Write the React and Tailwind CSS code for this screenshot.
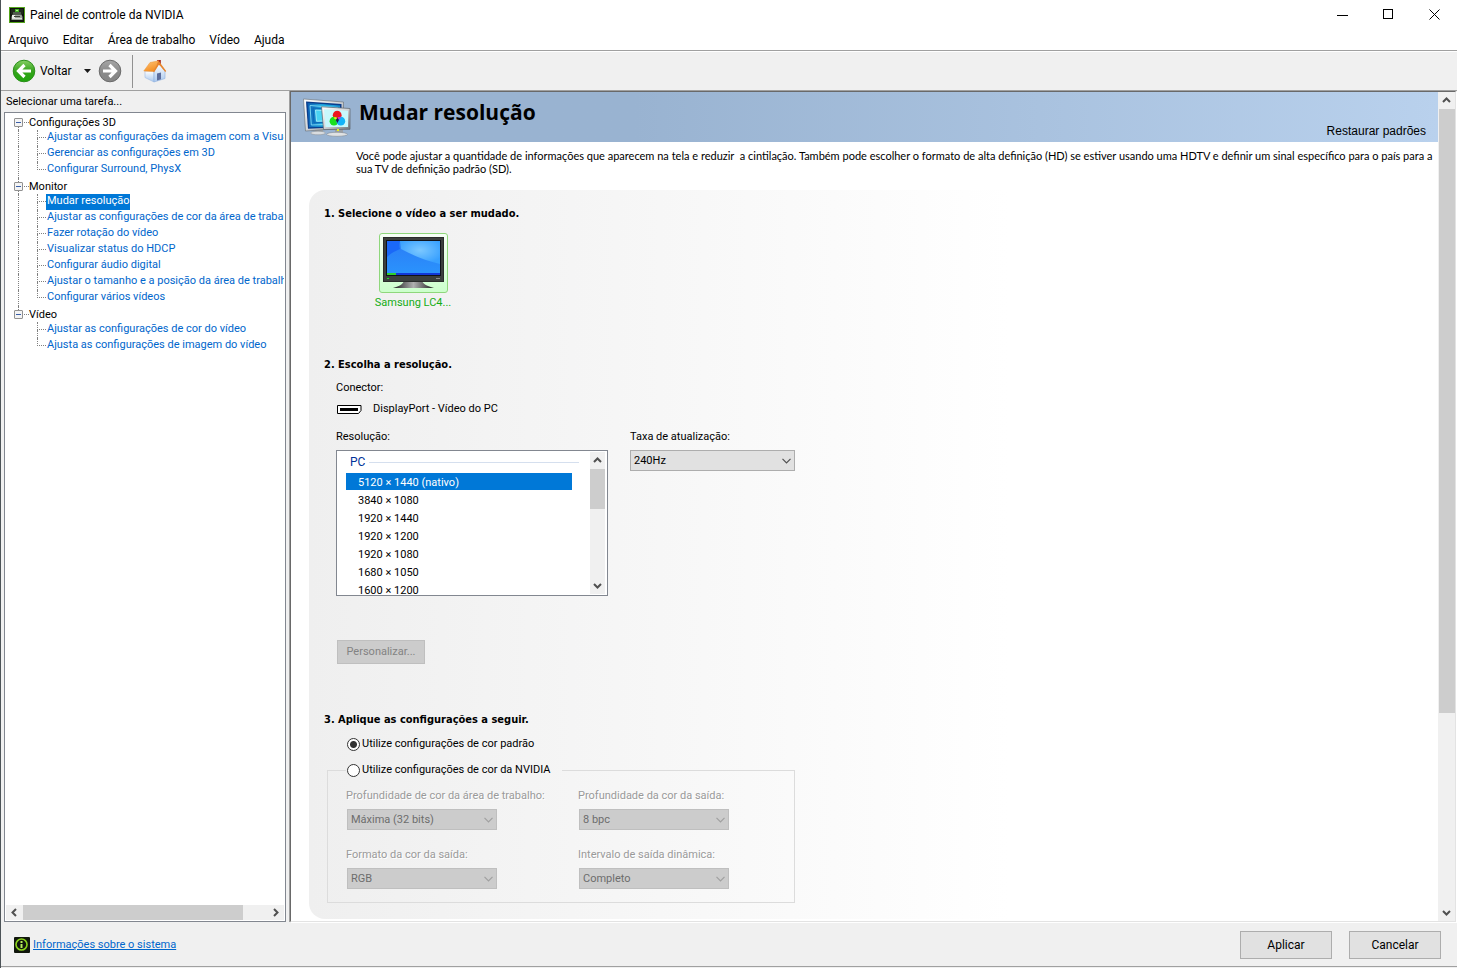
import React, { useState } from "react";

const MENU = ["Arquivo", "Editar", "Área de trabalho", "Vídeo", "Ajuda"];

const TREE = [
  {
    label: "Configurações 3D",
    items: [
      "Ajustar as configurações da imagem com a Visualização",
      "Gerenciar as configurações em 3D",
      "Configurar Surround, PhysX",
    ],
  },
  {
    label: "Monitor",
    items: [
      "Mudar resolução",
      "Ajustar as configurações de cor da área de trabalho",
      "Fazer rotação do vídeo",
      "Visualizar status do HDCP",
      "Configurar áudio digital",
      "Ajustar o tamanho e a posição da área de trabalho",
      "Configurar vários vídeos",
    ],
  },
  {
    label: "Vídeo",
    items: ["Ajustar as configurações de cor do vídeo", "Ajusta as configurações de imagem do vídeo"],
  },
];

const RESOLUTIONS = [
  "5120 × 1440 (nativo)",
  "3840 × 1080",
  "1920 × 1440",
  "1920 × 1200",
  "1920 × 1080",
  "1680 × 1050",
  "1600 × 1200",
];

function AppIcon() {
  return (
    <svg width="16" height="16" viewBox="0 0 16 16" aria-hidden="true">
      <rect x="0.5" y="0.5" width="15" height="15" fill="#0e130c" stroke="#55a51c" />
      <rect x="2" y="2" width="12" height="5" fill="#20281d" />
      <rect x="4" y="5" width="8" height="2" fill="#4f5a4c" />
      <rect x="6" y="2" width="4" height="3" fill="#3fae22" />
      <rect x="7" y="3" width="2" height="1" fill="#a6f57e" />
      <path d="M3.500 7.500h9l1 2.500v3h-11v-3z" fill="#9da39b" />
      <rect x="3" y="8" width="3" height="3" fill="#e9ece8" />
      <rect x="5" y="9" width="6" height="1" fill="#3a3f38" />
      <rect x="3" y="11" width="10" height="1" fill="#d9dcd8" />
    </svg>
  );
}

function ArrowDisc({ green, flip }) {
  const id = green ? "discGreen" : "discGray";
  return (
    <svg width="24" height="24" viewBox="0 0 24 24" aria-hidden="true">
      <defs>
        <linearGradient id={id} x1="0" y1="0" x2="0" y2="1">
          <stop offset="0" stopColor={green ? "#86cf64" : "#a6a6a6"} />
          <stop offset="0.5" stopColor={green ? "#35a31c" : "#8c8c8c"} />
          <stop offset="1" stopColor={green ? "#1fa60c" : "#858585"} />
        </linearGradient>
      </defs>
      <circle cx="12" cy="12" r="10.800" fill={"url(#" + id + ")"} stroke={green ? "#2a8f1a" : "#6b6b6b"} />
      <path
        d={flip ? "M5 12h11.500M11.500 6l6 6-6 6" : "M19 12H7.500M12.500 6l-6 6 6 6"}
        fill="none"
        stroke="#fff"
        strokeWidth="3.200"
      />
    </svg>
  );
}

function HouseIcon() {
  return (
    <svg width="24" height="24" viewBox="0 0 24 24" aria-hidden="true">
      <defs>
        <linearGradient id="roof" x1="0" y1="0" x2="0.5" y2="1">
          <stop offset="0" stopColor="#fdc47c" />
          <stop offset="1" stopColor="#f58f22" />
        </linearGradient>
        <linearGradient id="wall" x1="0" y1="0" x2="0" y2="1">
          <stop offset="0" stopColor="#ffffff" />
          <stop offset="1" stopColor="#a9c8ee" />
        </linearGradient>
      </defs>
      <path d="M2 12l9 0v11L2 18.500z" fill="url(#wall)" stroke="#9dbbe2" strokeWidth="0.6" />
      <path d="M11 12l5-7.500 6 7.500v7.500L11 23z" fill="url(#wall)" stroke="#8fb0dd" strokeWidth="0.6" />
      <path d="M14 14.500l4-1v6.800l-4 1.200z" fill="#5c6d9c" />
      <path d="M14.200 1h3.600v6l-3.600-2.500z" fill="#a52318" />
      <path d="M0.800 12L7 3.500l8.800-1.700-5.300 10.700z" fill="url(#roof)" stroke="#ee9433" strokeWidth="0.5" />
      <path d="M15.800 2l7.400 10-1 1-6.200-7.600-4.800 7.800-1.200-.6z" fill="#e8852c" />
    </svg>
  );
}

function ScreensIcon() {
  return (
    <svg width="48" height="40" viewBox="0 0 48 40" aria-hidden="true">
      <defs>
        <linearGradient id="screenBlue" x1="0" y1="0" x2="1" y2="0">
          <stop offset="0" stopColor="#0b5fb4" />
          <stop offset="0.5" stopColor="#22b2e4" />
          <stop offset="1" stopColor="#1a8fd0" />
        </linearGradient>
        <linearGradient id="frameGray" x1="0" y1="0" x2="1" y2="1">
          <stop offset="0" stopColor="#ffffff" />
          <stop offset="0.5" stopColor="#d3d6d9" />
          <stop offset="1" stopColor="#70767c" />
        </linearGradient>
      </defs>
      <path d="M12 32l8-1v4h-8z" fill="#a4a9ae" />
      <ellipse cx="15" cy="35" rx="7.500" ry="1.800" fill="#d9dcdf" stroke="#868c92" strokeWidth="0.5" />
      <path d="M0.500 1l40 3v26.500L2.500 33z" fill="url(#frameGray)" stroke="#656b72" strokeWidth="0.6" />
      <path d="M3 3.500l35.500 2.600V29L5 30.800z" fill="#0a3d8c" />
      <path d="M4.500 5l32.500 2.400V28L6 29.300z" fill="url(#screenBlue)" />
      <path d="M7 7.500l27.500 2V26L8.300 27z" fill="none" stroke="#7fdcf6" strokeWidth="0.9" />
      <path d="M10 10l22 1.600V24l-21 .8z" fill="none" stroke="#0d62b4" strokeWidth="0.9" />
      <path d="M12.500 12l17 1.200v9.500l-16 .6z" fill="#49d3f2" stroke="#a8f0fc" strokeWidth="0.9" />
      <path d="M32 31h8v4.500h-8z" fill="#9a9fa5" />
      <ellipse cx="34" cy="36.300" rx="10.500" ry="2" fill="#dfe2e4" stroke="#7d8388" strokeWidth="0.5" />
      <path d="M18.500 8.800L47 10.500v20.800L20.500 31.500z" fill="url(#frameGray)" stroke="#5c6268" strokeWidth="0.7" />
      <path d="M21 11.300l24 1.400v16.300L22.500 29z" fill="#c8f8fc" />
      <circle cx="34.200" cy="17.200" r="4.400" fill="#ee1620" />
      <circle cx="31" cy="23.200" r="4.400" fill="#18e01e" />
      <circle cx="37.800" cy="23.200" r="4.400" fill="#14b4f8" />
      <path d="M30.500 19.500c1 2 2.500 2.200 3.700 1.600l-1-2.200z" fill="#f6e21a" />
      <path d="M38 19.500c-1 2-2.500 2.200-3.700 1.600l1-2.200z" fill="#e020d0" />
      <path d="M34.400 19.800l1.600 2.200-1.600 3-1.600-3z" fill="#241c4c" />
      <rect x="34" y="31" width="2" height="2" fill="#e6f01c" />
    </svg>
  );
}

function MonitorIcon() {
  return (
    <svg width="63" height="52" viewBox="0 0 63 52" aria-hidden="true">
      <defs>
        <linearGradient id="desk" x1="0" y1="0" x2="0" y2="1">
          <stop offset="0" stopColor="#2b7cf6" />
          <stop offset="1" stopColor="#2a94fd" />
        </linearGradient>
        <radialGradient id="glow" cx="0.5" cy="0.4" r="0.6">
          <stop offset="0" stopColor="#7cc8ff" />
          <stop offset="1" stopColor="#38a0ff" />
        </radialGradient>
        <linearGradient id="foot" x1="0" y1="0" x2="1" y2="0">
          <stop offset="0" stopColor="#1c1c1c" />
          <stop offset="0.5" stopColor="#b0b0b0" />
          <stop offset="1" stopColor="#1c1c1c" />
        </linearGradient>
      </defs>
      <path d="M22 44h18c1 3 5 5 12 7H11c7-2 10-4 11-7z" fill="url(#foot)" />
      <rect x="1" y="0" width="61" height="45" fill="#3b3f3d" />
      <rect x="1.500" y="0.500" width="60" height="44" fill="none" stroke="#2a2c2b" />
      <rect x="4" y="3" width="55" height="36" fill="#10131a" />
      <rect x="5" y="4" width="53" height="34" fill="url(#desk)" />
      <path d="M18 4h40v23C44 24 30 18 19 12z" fill="url(#glow)" />
      <path d="M5 4h13c-1 3-1 5 0 8-5 2-9 4-13 8z" fill="#1a68f8" />
      <rect x="5" y="36" width="53" height="2" fill="#1238d8" />
      <rect x="5" y="36" width="9" height="2" fill="#2fd02c" />
      <rect x="5" y="41" width="2" height="1" fill="#18e018" />
      <rect x="54" y="41" width="4" height="1" fill="#8a8a8a" />
    </svg>
  );
}

function InfoIcon() {
  return (
    <svg width="16" height="16" viewBox="0 0 16 16" aria-hidden="true">
      <rect width="16" height="16" rx="1" fill="#10160c" />
      <circle cx="7.500" cy="7.500" r="5.500" fill="none" stroke="#8bd41c" strokeWidth="1.600" />
      <rect x="6.500" y="4" width="2" height="2" fill="#b6ec5c" />
      <rect x="6.500" y="7" width="2" height="4" fill="#b6ec5c" />
    </svg>
  );
}

const CHEVRONS = {
  up: "M1 6L4.500 2.500 8 6",
  down: "M1 3L4.500 6.500 8 3",
  left: "M6 1L2.500 4.500 6 8",
  right: "M3 1l3.500 3.500L3 8",
};

function ScrollArrow({ dir, label }) {
  return (
    <button type="button" aria-label={label} className="flex size-[17px] shrink-0 items-center justify-center">
      <svg width="9" height="9" viewBox="0 0 9 9" aria-hidden="true">
        <path d={CHEVRONS[dir]} fill="none" stroke="#505050" strokeWidth="2" />
      </svg>
    </button>
  );
}

function Combo({ id, value, disabled, className }) {
  return (
    <span className={"grid h-[21px] items-center " + className}>
      <select
        id={id}
        disabled={disabled}
        defaultValue={value}
        className={
          "col-start-1 row-start-1 h-full w-full appearance-none border pl-[3px] pt-px opacity-100 " +
          (disabled ? "border-[#bfbfbf] bg-[#cccccc] text-[#6d6d6d]" : "border-[#adadad] bg-[#e1e1e1] text-black")
        }
      >
        <option>{value}</option>
      </select>
      <svg
        width="9"
        height="6"
        viewBox="0 0 9 6"
        aria-hidden="true"
        className="pointer-events-none col-start-1 row-start-1 mr-1 justify-self-end"
      >
        <path d="M0.500 0.800l4 4 4-4" fill="none" stroke={disabled ? "#a0a0a0" : "#505050"} strokeWidth="1.200" />
      </svg>
    </span>
  );
}

function DisabledField({ id, label, value }) {
  return (
    <div className="flex flex-col gap-[5px]">
      <label htmlFor={id} className="whitespace-nowrap text-[#9a9a9a] [text-shadow:1px_1px_0_white]">
        {label}
      </label>
      <Combo id={id} value={value} disabled className="ml-px w-[150px]" />
    </div>
  );
}

function TreeGroup({ group, first, last, selected, onSelect }) {
  const dots = "border-[#808080] border-dotted";
  return (
    <li>
      <div className="flex h-4 items-center">
        <span className="ml-[9px] flex h-4 w-[9px] flex-col items-center">
          <span className={"h-1 w-px " + (first ? "" : dots + " border-l")} />
          <button
            type="button"
            aria-label={"Recolher " + group.label}
            className="flex size-[9px] shrink-0 items-center justify-center rounded-[1px] border border-[#919191] bg-[#f4f4f4]"
          >
            <span className="h-px w-[5px] bg-[#3a5fa8]" />
          </button>
          <span className={"h-[3px] w-px " + (last ? "" : dots + " border-l")} />
        </span>
        <span className={"ml-px h-px w-[5px] border-t " + dots} />
        <span className="whitespace-nowrap pt-px">{group.label}</span>
      </div>
      <ul>
        {group.items.map((item, i) => (
          <li key={item} className="flex h-4">
            <span className={"ml-[13px] w-px shrink-0 " + (last ? "" : dots + " border-l")} />
            <span className="ml-[18px] w-[9px] shrink-0">
              <span className={"block h-2 border-b border-l " + dots} />
              <span className={"block h-2 " + (i === group.items.length - 1 ? "" : dots + " border-l")} />
            </span>
            <button
              type="button"
              onClick={() => onSelect(item)}
              className={
                "whitespace-nowrap pb-[2px] pl-px leading-[14px] " +
                (item === selected ? "bg-[#0078d7] pr-px text-white" : "text-[#0066cc]")
              }
            >
              {item}
            </button>
          </li>
        ))}
      </ul>
    </li>
  );
}

export default function App() {
  const [task, setTask] = useState("Mudar resolução");
  const [resolution, setResolution] = useState(RESOLUTIONS[0]);
  const [colorMode, setColorMode] = useState("default");
  const heading = "pt-px font-['DejaVu_Sans_Condensed',sans-serif] font-bold leading-[15px]";
  const radio =
    "size-[13px] shrink-0 appearance-none rounded-full border border-[#333] bg-white checked:bg-[radial-gradient(circle,#333_3px,#fff_4px)]";

  return (
    <div className="flex h-screen flex-col border-l border-[#4c5357] bg-[#f0f0f0] font-['Roboto',sans-serif] text-[11px] leading-4 text-black">
      <header className="border-b border-[#a0a0a0] bg-white text-[12px]">
        <div className="flex h-[30px] items-start justify-between">
          <div className="flex items-center gap-[5px] pl-2 pt-[6px]">
            <AppIcon />
            <span className="pt-px">Painel de controle da NVIDIA</span>
          </div>
          <div className="flex">
            <button type="button" aria-label="Minimizar" className="flex h-7 w-[46px] items-center justify-center">
              <svg width="11" height="11" viewBox="0 0 11 11" stroke="#000" fill="none" aria-hidden="true">
                <path d="M0 6.500h11" />
              </svg>
            </button>
            <button type="button" aria-label="Maximizar" className="flex h-7 w-[46px] items-center justify-center">
              <svg width="11" height="11" viewBox="0 0 11 11" stroke="#000" fill="none" aria-hidden="true">
                <rect x="0.5" y="0.5" width="9" height="9" />
              </svg>
            </button>
            <button type="button" aria-label="Fechar" className="flex h-7 w-[46px] items-center justify-center">
              <svg width="11" height="11" viewBox="0 0 11 11" stroke="#000" fill="none" aria-hidden="true">
                <path d="M0.500 0.500l10 10M10.500 0.500l-10 10" />
              </svg>
            </button>
          </div>
        </div>
        <nav className="flex h-5 items-center gap-[14px] pl-[7px]">
          {MENU.map((m) => (
            <button key={m} type="button">
              {m}
            </button>
          ))}
        </nav>
      </header>

      <div className="flex h-[39px] shrink-0 items-center border-t border-white pl-[11px] text-[12px]">
        <button type="button" className="flex items-center gap-1">
          <ArrowDisc green />
          Voltar
        </button>
        <button type="button" aria-label="Histórico" className="ml-2 flex h-6 w-4 items-center justify-center">
          <svg width="7" height="4" viewBox="0 0 7 4" aria-hidden="true">
            <path d="M0 0h7L3.500 4z" fill="#1a1a1a" />
          </svg>
        </button>
        <button type="button" aria-label="Avançar" className="ml-[2px]">
          <ArrowDisc flip />
        </button>
        <span className="ml-[10px] h-[33px] w-px bg-[#919191]" />
        <button type="button" aria-label="Início" className="ml-[10px]">
          <HouseIcon />
        </button>
      </div>

      <div className="flex min-h-0 flex-1 border-t border-[#a0a0a0]">
        <aside className="flex w-[285px] shrink-0 flex-col pl-[3px]">
          <div className="px-[2px] pb-[2px] pt-[3px]">Selecionar uma tarefa...</div>
          <div className="flex min-h-0 flex-1 flex-col border border-[#828790] bg-white">
            <ul className="mr-px min-h-0 flex-1 overflow-hidden pt-px">
              {TREE.map((g, i) => (
                <TreeGroup
                  key={g.label}
                  group={g}
                  first={i === 0}
                  last={i === TREE.length - 1}
                  selected={task}
                  onSelect={setTask}
                />
              ))}
            </ul>
            <div className="mx-px mb-px flex h-[15px] items-center bg-[#f0f0f0]">
              <ScrollArrow dir="left" label="Rolar para a esquerda" />
              <div className="h-full flex-1">
                <div className="h-full w-[90%] bg-[#cdcdcd]" />
              </div>
              <ScrollArrow dir="right" label="Rolar para a direita" />
            </div>
          </div>
        </aside>

        <main className="ml-1 mr-px flex min-w-0 flex-1 border border-b-[#e3e3e3] border-l-[#696969] border-r-[#e3e3e3] border-t-[#696969] bg-white shadow-[-1px_0_0_#a0a0a0,1px_1px_0_white]">
          <div className="min-w-0 flex-1 overflow-hidden">
            <div className="flex h-[50px] justify-between bg-linear-to-r from-[#99b3d1] from-30% to-[#b9d1ed] pl-3">
              <div className="flex items-start gap-2 pt-[6px]">
                <ScreensIcon />
                <h1 className="font-['Open_Sans',sans-serif] text-[21px] font-bold leading-7">Mudar resolução</h1>
              </div>
              <button
                type="button"
                className="self-end pb-[3px] pr-3 font-['Liberation_Sans',sans-serif] text-[12px] leading-4"
              >
                Restaurar padrões
              </button>
            </div>
            <p className="pb-[15px] pl-[65px] pr-1 pt-[7px] font-['Lato',sans-serif] leading-[13px]">
              Você pode ajustar a quantidade de informações que aparecem na tela e reduzir&nbsp; a cintilação. Também
              pode escolher o formato de alta definição (HD) se estiver usando uma HDTV e definir um sinal específico
              para o país para a sua TV de definição padrão (SD).
            </p>

            <div className="ml-[18px] rounded-l-2xl bg-linear-to-r from-[#efefef] to-white to-[62%] pb-4 pl-[15px] pt-[15px]">
              <section>
                <h2 className={heading}>1. Selecione o vídeo a ser mudado.</h2>
                <div className="ml-[46px] flex w-[86px] flex-col items-center gap-[2px] pt-3 text-[#14ad14]">
                  <button
                    type="button"
                    aria-label="Samsung"
                    className="flex h-[60px] w-[69px] items-end justify-center rounded-[3px] border border-[#8fd77c] bg-linear-to-b from-[#f6fff6] to-[#ccffcc] pb-[3px]"
                  >
                    <MonitorIcon />
                  </button>
                  <span>Samsung LC4...</span>
                </div>
              </section>

              <section className="mt-[45px]">
                <h2 className={heading}>2. Escolha a resolução.</h2>
                <div className="pl-3 pt-2">
                  <div>Conector:</div>
                  <div className="mt-[5px] flex items-center gap-[11px] pl-px">
                    <svg width="25" height="9" viewBox="0 0 25 9" aria-hidden="true">
                      <path d="M0.500 0.500h23.500v5l-2.500 3H0.500z" fill="#fff" stroke="#000" />
                      <path d="M3 3h18v3H3z" fill="#000" />
                    </svg>
                    <span>DisplayPort - Vídeo do PC</span>
                  </div>
                  <div className="mt-3 flex gap-[22px]">
                    <div className="w-[272px]">
                      <div id="res-label">Resolução:</div>
                      <div className="mt-[5px] flex h-[146px] border border-[#828790] bg-white">
                        <div className="min-w-0 flex-1 overflow-hidden pl-[9px] pr-[11px]">
                          <div className="flex h-[22px] items-center gap-1 pl-1 text-[12px] text-[#003399]">
                            PC
                            <span className="h-px flex-1 bg-[#d5dfee]" />
                          </div>
                          <ul role="listbox" aria-labelledby="res-label" className="mr-[7px]">
                            {RESOLUTIONS.map((r) => (
                              <li
                                key={r}
                                role="option"
                                aria-selected={r === resolution}
                                onClick={() => setResolution(r)}
                                className={
                                  "mb-px h-[17px] pl-3 leading-[19px] " +
                                  (r === resolution ? "bg-[#0078d7] text-white" : "")
                                }
                              >
                                {r}
                              </li>
                            ))}
                          </ul>
                        </div>
                        <div className="my-px mr-[2px] flex w-[15px] flex-col items-center bg-[#f0f0f0]">
                          <ScrollArrow dir="up" label="Rolar para cima" />
                          <div className="w-full flex-1">
                            <div className="h-10 w-full bg-[#cdcdcd]" />
                          </div>
                          <ScrollArrow dir="down" label="Rolar para baixo" />
                        </div>
                      </div>
                    </div>
                    <div className="flex flex-col gap-[5px]">
                      <label htmlFor="refresh">Taxa de atualização:</label>
                      <Combo id="refresh" value="240Hz" className="w-[165px]" />
                    </div>
                  </div>
                  <button
                    type="button"
                    disabled
                    className="ml-px mt-11 h-6 w-[88px] border border-[#bfbfbf] bg-[#cccccc] text-[#838383]"
                  >
                    Personalizar...
                  </button>
                </div>
              </section>

              <section className="mt-[47px]">
                <h2 className={heading}>3. Aplique as configurações a seguir.</h2>
                <label className="ml-[23px] mt-[9px] flex w-fit items-center gap-[2px]">
                  <input
                    type="radio"
                    name="color"
                    checked={colorMode === "default"}
                    onChange={() => setColorMode("default")}
                    className={radio}
                  />
                  Utilize configurações de cor padrão
                </label>
                <fieldset className="ml-[3px] mt-[10px] w-[468px] border border-[#dcdcdc] pb-[13px] pl-[18px]">
                  <legend className="pl-px pr-3">
                    <label className="flex items-center gap-[2px]">
                      <input
                        type="radio"
                        name="color"
                        checked={colorMode === "nvidia"}
                        onChange={() => setColorMode("nvidia")}
                        className={radio}
                      />
                      Utilize configurações de cor da NVIDIA
                    </label>
                  </legend>
                  <div className="grid grid-cols-[232px_1fr] gap-y-[17px] pt-[10px]">
                    <DisabledField id="depth" label="Profundidade de cor da área de trabalho:" value="Máxima (32 bits)" />
                    <DisabledField id="out-depth" label="Profundidade da cor da saída:" value="8 bpc" />
                    <DisabledField id="format" label="Formato da cor da saída:" value="RGB" />
                    <DisabledField id="range" label="Intervalo de saída dinâmica:" value="Completo" />
                  </div>
                </fieldset>
              </section>
            </div>
          </div>

          <div className="flex w-[17px] shrink-0 flex-col items-center bg-[#f0f0f0]">
            <ScrollArrow dir="up" label="Rolar para cima" />
            <div className="w-full flex-1 pl-px">
              <div className="h-[76%] w-full bg-[#cdcdcd]" />
            </div>
            <ScrollArrow dir="down" label="Rolar para baixo" />
          </div>
        </main>
      </div>

      <footer className="mb-px flex h-[45px] shrink-0 items-center justify-between border-b border-[#a0a0a0] pl-[13px] pr-4 pt-[2px]">
        <a href="#info" className="flex items-center gap-[3px] text-[#0066cc] underline">
          <InfoIcon />
          Informações sobre o sistema
        </a>
        <div className="flex gap-[17px] text-[12px]">
          <button type="button" className="h-7 w-[92px] border border-[#adadad] bg-[#e1e1e1]">
            Aplicar
          </button>
          <button type="button" className="h-7 w-[92px] border border-[#adadad] bg-[#e1e1e1]">
            Cancelar
          </button>
        </div>
      </footer>
    </div>
  );
}
